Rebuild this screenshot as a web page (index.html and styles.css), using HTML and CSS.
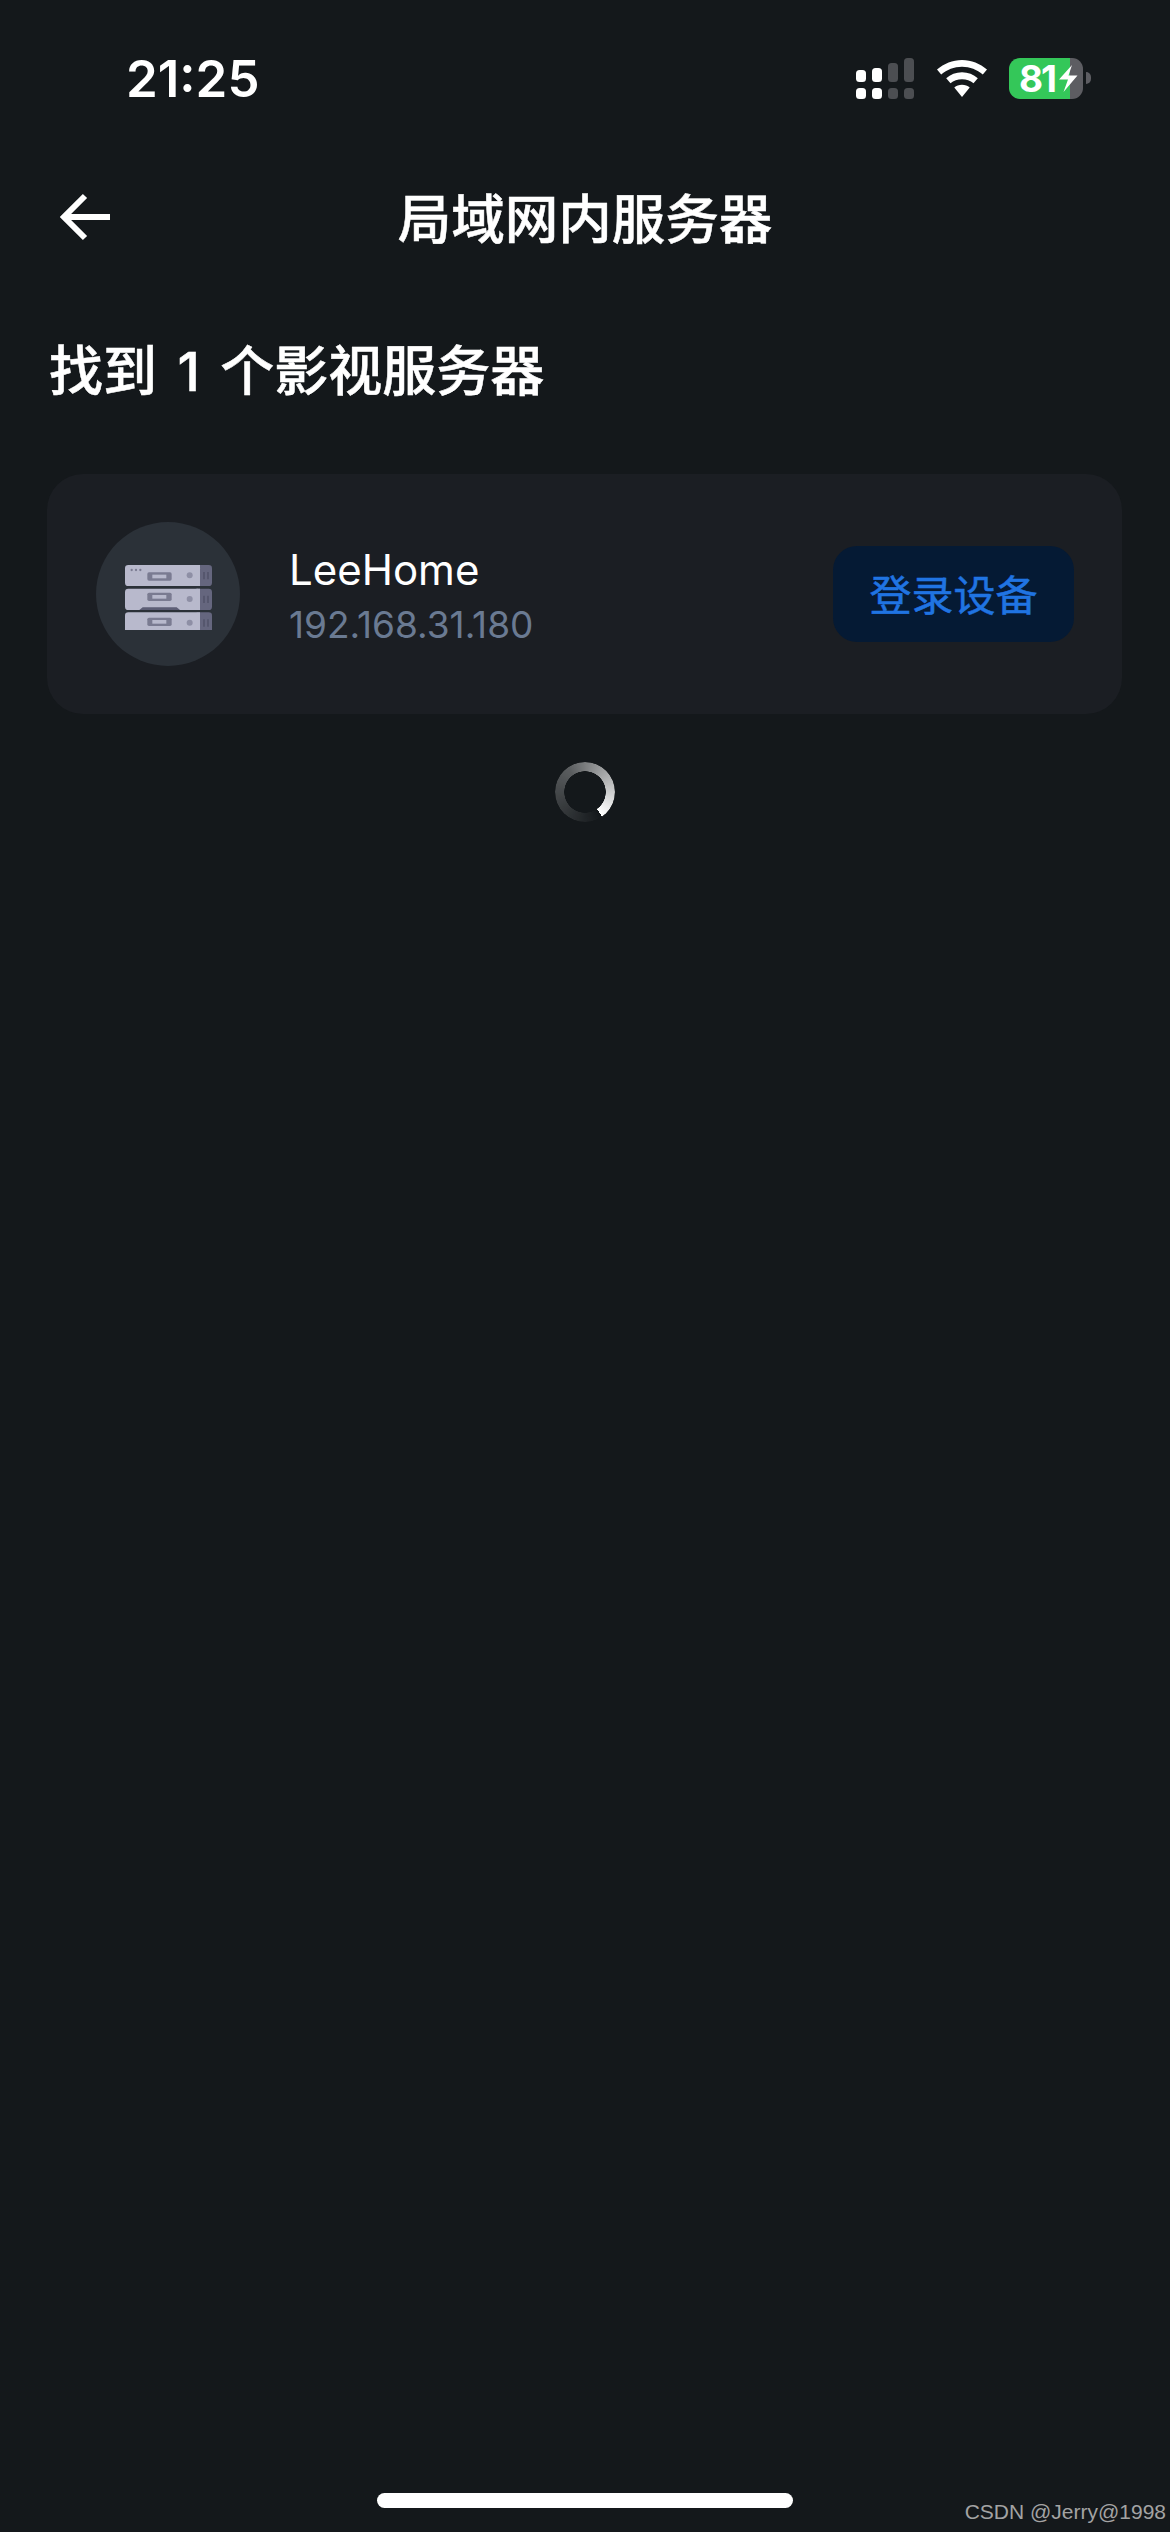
FILE: index.html
```html
<!DOCTYPE html>
<html lang="zh-CN">
<head>
<meta charset="utf-8">
<title>局域网内服务器</title>
<link rel="stylesheet" href="styles.css">
</head>
<body>
<div class="page">
  <header class="status">
    <span class="time">21:25</span>
    <div class="status-icons">
      <svg class="signal" width="58" height="41" viewBox="0 0 58 41">
        <rect x="0" y="12" width="10" height="12" rx="3.5" fill="#fff"/>
        <rect x="16" y="10" width="10" height="14" rx="3.5" fill="#fff"/>
        <rect x="32" y="5" width="10" height="19" rx="3.5" fill="#4c4e52"/>
        <rect x="48" y="0" width="10" height="24" rx="3.5" fill="#4c4e52"/>
        <rect x="0" y="30" width="10" height="11" rx="3.5" fill="#fff"/>
        <rect x="16" y="30" width="10" height="11" rx="3.5" fill="#fff"/>
        <rect x="32" y="30" width="10" height="11" rx="3.5" fill="#4c4e52"/>
        <rect x="48" y="30" width="10" height="11" rx="3.5" fill="#4c4e52"/>
      </svg>
      <svg class="wifi" width="50" height="37" viewBox="0 0 50 37">
        <path d="M25 0C15.500 0 7 3.700 0 9.500L4.200 14.500C10 9.800 17 6.800 25 6.800S40 9.800 45.800 14.500L50 9.500C43 3.700 34.500 0 25 0Z" fill="#fff"/>
        <path d="M25 12.300C19 12.300 13.500 14.500 9.200 18.200L13.500 23.300C16.600 20.700 20.600 19.200 25 19.200S33.400 20.700 36.500 23.300L40.800 18.200C36.500 14.500 31 12.300 25 12.300Z" fill="#fff"/>
        <path d="M25 24.800C22 24.800 19.300 25.800 17.300 27.500L25 37L32.700 27.500C30.700 25.800 28 24.800 25 24.800Z" fill="#fff"/>
      </svg>
      <div class="battery">
        <div class="battery-body">
          <span class="battery-level">81</span>
          <svg class="bolt" width="19" height="27" viewBox="0 0 19 27">
            <path d="M13 0L0 14.500H9L4.500 27L18.500 10.500H9.500Z" fill="#fff"/>
          </svg>
        </div>
        <span class="battery-nub"></span>
      </div>
    </div>
  </header>

  <nav class="nav">
    <svg class="back" width="50" height="50" viewBox="0 0 50 50">
      <path d="M25 3L4 24L25 45M4 24H50" fill="none" stroke="#fff" stroke-width="6"/>
    </svg>
    <h1 class="nav-title">局域网内服务器</h1>
  </nav>

  <h2 class="found">找到 1 个影视服务器</h2>

  <section class="card">
    <div class="avatar">
      <svg class="server" width="87" height="65" viewBox="135 165 261 195">
        <g>
          <rect x="340" y="165" width="56" height="63" rx="10" fill="#65667e"/>
          <rect x="135" y="165" width="225" height="63" rx="10" fill="#b8b9cc"/>
          <rect x="350" y="165" width="10" height="63" fill="#b8b9cc"/>
          <circle cx="155" cy="180" r="3.500" fill="#7a7b91"/>
          <circle cx="168" cy="180" r="3.500" fill="#7a7b91"/>
          <circle cx="181" cy="180" r="3.500" fill="#7a7b91"/>
          <rect x="202" y="187" width="73" height="25" rx="5" fill="#7a7b91"/>
          <rect x="217" y="194" width="42" height="11" fill="#b8b9cc"/>
          <circle cx="329" cy="196" r="9" fill="#8e8fa5"/>
          <path d="M372 186V208M384 186V208" stroke="#4f5066" stroke-width="4"/>
        </g>
        <g>
          <rect x="340" y="236" width="56" height="64" rx="10" fill="#65667e"/>
          <rect x="135" y="236" width="225" height="64" rx="10" fill="#b8b9cc"/>
          <rect x="350" y="236" width="10" height="64" fill="#b8b9cc"/>
          <path d="M178 300L188 292H290L300 300Z" fill="#5d5e76"/>
          <rect x="202" y="248" width="73" height="25" rx="5" fill="#7a7b91"/>
          <rect x="217" y="255" width="42" height="11" fill="#b8b9cc"/>
          <circle cx="329" cy="267" r="9" fill="#8e8fa5"/>
          <path d="M372 257V279M384 257V279" stroke="#4f5066" stroke-width="4"/>
        </g>
        <g>
          <path d="M350 307H386A10 10 0 0 1 396 317V360H350Z" fill="#65667e"/>
          <path d="M145 307H360V360H135V317A10 10 0 0 1 145 307Z" fill="#b8b9cc"/>
          <rect x="202" y="323" width="73" height="25" rx="5" fill="#7a7b91"/>
          <rect x="217" y="330" width="42" height="11" fill="#b8b9cc"/>
          <circle cx="329" cy="338" r="9" fill="#8e8fa5"/>
          <path d="M372 328V350M384 328V350" stroke="#4f5066" stroke-width="4"/>
        </g>
      </svg>
    </div>
    <div class="device">
      <div class="device-name">LeeHome</div>
      <div class="device-ip">192.168.31.180</div>
    </div>
    <button class="login" type="button">登录设备</button>
  </section>

  <div class="spinner"></div>

  <div class="home-bar"></div>
  <span class="watermark">CSDN @Jerry@1998</span>
</div>
</body>
</html>
```
FILE: styles.css
```css
* { box-sizing: border-box; }
html, body { margin: 0; padding: 0; background: #14181b; }
.page {
  position: relative;
  width: 1170px;
  height: 2532px;
  overflow: hidden;
  background: #14181b;
  color: #fff;
  font-family: Inter, "Noto Sans CJK SC", sans-serif;
  display: flex;
  flex-direction: column;
}
.status {
  height: 156px;
  flex: none;
  display: flex;
  align-items: center;
  justify-content: space-between;
  padding: 0 79px 0 126px;
}
.time { font-size: 51px; font-weight: 600; line-height: 1; }
.status-icons { display: flex; align-items: center; }
.signal { margin-right: 23px; }
.wifi { margin-right: 22px; }
.battery { display: flex; align-items: center; }
.battery-body {
  width: 74px;
  height: 41px;
  border-radius: 11px;
  background: linear-gradient(to right, #34c759 0, #34c759 61px, #5d5d62 61px);
  display: flex;
  align-items: center;
  padding-left: 10px;
}
.battery-level { font-size: 37px; font-weight: 700; line-height: 1; letter-spacing: -2px; }
.bolt { margin-left: 4px; }
.battery-nub {
  width: 5px;
  height: 12px;
  margin-left: 3px;
  border-radius: 0 6px 6px 0;
  background: #5d5d62;
}
.nav {
  height: 124px;
  flex: none;
  position: relative;
  display: flex;
  align-items: center;
  justify-content: center;
}
.back { position: absolute; left: 60px; top: 37px; }
.nav-title {
  margin: 0;
  padding-top: 5px;
  font-size: 53.5px;
  font-weight: 500;
  line-height: 1.2;
  -webkit-text-stroke: 0.5px #fff;
}
.found {
  margin: 58px 0 0 49px;
  font-size: 54px;
  font-weight: 500;
  line-height: 68px;
  height: 68px;
  word-spacing: 6px;
  white-space: pre;
  -webkit-text-stroke: 0.5px #fff;
}
.card {
  margin: 68px 48px 0 47px;
  height: 240px;
  flex: none;
  display: flex;
  align-items: center;
  padding: 0 48px 0 49px;
  border-radius: 36px;
  background: #1b1e23;
}
.avatar {
  width: 144px;
  height: 144px;
  flex: none;
  border-radius: 50%;
  background: #2b3138;
  display: flex;
  align-items: center;
  justify-content: center;
  padding-top: 6px;
}
.device { margin-left: 49px; flex: 1; padding-top: 5px; }
.device-name { font-size: 42px; font-weight: 400; line-height: 56px; }
.device-ip { margin-top: 1px; font-size: 37px; line-height: 52px; color: #6a7a92; }
.login {
  width: 241px;
  height: 96px;
  border: 0;
  border-radius: 24px;
  background: #051a34;
  color: #2074e2;
  font-family: inherit;
  font-size: 42px;
  font-weight: 400;
  -webkit-text-stroke: 0.5px #2074e2;
  padding: 0 0 4px;
}
.spinner {
  width: 60px;
  height: 60px;
  margin: 48px auto 0;
  flex: none;
  border-radius: 50%;
  background: conic-gradient(from 145deg, rgba(255,255,255,0) 0deg, rgba(255,255,255,.3) 180deg, #fff 360deg);
  -webkit-mask: radial-gradient(circle, transparent 20.500px, #000 21px);
  mask: radial-gradient(circle, transparent 20.500px, #000 21px);
}
.home-bar {
  width: 416px;
  height: 15px;
  margin: auto auto 24px;
  flex: none;
  border-radius: 8px;
  background: #fff;
}
.watermark {
  position: absolute;
  right: 4px;
  bottom: 8px;
  font-family: "Liberation Sans", sans-serif;
  font-size: 21px;
  color: #a3a3a3;
  white-space: nowrap;
}
```
